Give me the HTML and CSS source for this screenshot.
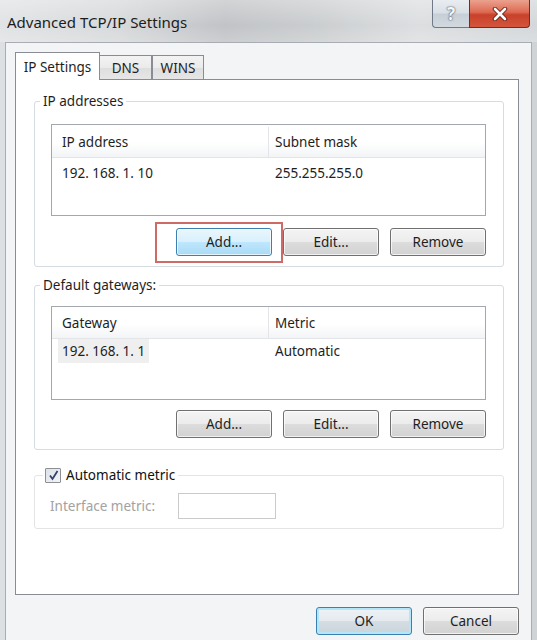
FILE: index.html
```html
<!DOCTYPE html>
<html>
<head>
<meta charset="utf-8">
<title>Advanced TCP/IP Settings</title>
<link rel="stylesheet" href="styles.css">
</head>
<body>
<div class="window">
  <div class="titlebar">
    <span class="title">Advanced TCP/IP Settings</span>
    <div class="caption-btns">
      <span class="cap help">?</span>
      <span class="cap close">
        <svg width="16" height="14" viewBox="0 0 16 14"><path d="M3 2 L13 12 M13 2 L3 12" stroke="#6b2418" stroke-width="4.5" stroke-linecap="round"/><path d="M3 2 L13 12 M13 2 L3 12" stroke="#ffffff" stroke-width="2.6" stroke-linecap="round"/></svg>
      </span>
    </div>
  </div>
  <div class="client">
    <div class="tabs">
      <div class="tab active">IP Settings</div>
      <div class="tab dns">DNS</div>
      <div class="tab wins">WINS</div>
    </div>
    <div class="panel">
      <fieldset class="group g1">
        <legend>IP addresses</legend>
        <div class="group-body body1">
          <div class="list list1">
            <div class="list-head">
              <div class="col c1"><span class="cell">IP address</span></div>
              <div class="col c2"><span class="cell">Subnet mask</span></div>
            </div>
            <div class="list-row">
              <div class="col c1"><span class="cell">192. 168. 1. 10</span></div>
              <div class="col c2"><span class="cell">255.255.255.0</span></div>
            </div>
          </div>
          <div class="btn-row row1">
            <span class="highlight"><button class="btn hot">Add...</button></span>
            <button class="btn">Edit...</button>
            <button class="btn">Remove</button>
          </div>
        </div>
      </fieldset>

      <fieldset class="group g2">
        <legend>Default gateways:</legend>
        <div class="group-body body2">
          <div class="list list2">
            <div class="list-head">
              <div class="col c1"><span class="cell">Gateway</span></div>
              <div class="col c2"><span class="cell">Metric</span></div>
            </div>
            <div class="list-row">
              <div class="col c1"><span class="cell selected">192. 168. 1. 1</span></div>
              <div class="col c2"><span class="cell">Automatic</span></div>
            </div>
          </div>
          <div class="btn-row row2">
            <button class="btn">Add...</button>
            <button class="btn">Edit...</button>
            <button class="btn">Remove</button>
          </div>
        </div>
      </fieldset>

      <fieldset class="group g3">
        <legend class="check-legend">
          <span class="checkbox">
            <svg width="11" height="11" viewBox="0 0 11 11"><path d="M2 5.5 L4.5 9 L9.5 1" stroke="#33416b" stroke-width="1.8" fill="none"/></svg>
          </span>
          <span class="check-label">Automatic metric</span>
        </legend>
        <div class="group-body body3">
          <span class="disabled-label">Interface metric:</span>
          <span class="textbox"></span>
        </div>
      </fieldset>
    </div>
    <div class="dialog-btns">
      <button class="btn default">OK</button>
      <button class="btn">Cancel</button>
    </div>
  </div>
</div>
</body>
</html>
```

FILE: styles.css
```css
html, body {
  margin: 0;
  padding: 0;
  width: 537px;
  height: 640px;
  overflow: hidden;
}

body {
  font-family: "Noto Sans", "Open Sans", sans-serif;
  font-size: 13.5px;
  color: #1e1e1e;
}

.window {
  width: 537px;
  height: 640px;
  overflow: hidden;
  display: flex;
  flex-direction: column;
  background: linear-gradient(90deg, #dde0e2 0%, #d2d5d7 22%, #babdc0 42%, #c4c7c9 58%, #d8dbdd 78%, #cfd3d6 100%);
}

.titlebar {
  height: 42px;
  flex: none;
  display: flex;
  align-items: flex-start;
  background: linear-gradient(180deg, rgba(255,255,255,0.35) 0%, rgba(255,255,255,0.1) 60%, rgba(255,255,255,0.25) 100%);
}

.title {
  padding: 12px 0 0 7px;
  font-size: 15px;
  line-height: 20px;
  color: #1c1c1c;
}

.caption-btns {
  margin-left: auto;
  margin-right: 7px;
  display: flex;
  height: 28px;
}

.cap {
  height: 27px;
  display: flex;
  align-items: center;
  justify-content: center;
  border: 1px solid #6f7a86;
  border-top: none;
}

.help {
  width: 36px;
  border-radius: 0 0 0 4px;
  border-right: none;
  background: linear-gradient(180deg, #e9edf1 0%, #d9dfe5 48%, #c6ced7 52%, #d3d9df 100%);
  color: #f4f6f8;
  font-weight: bold;
  font-size: 17px;
  text-shadow: 0 0 2px #4a5360, 0 0 1px #4a5360;
}

.close {
  width: 59px;
  border-color: #7a2a1c;
  border-radius: 0 0 4px 0;
  background: linear-gradient(180deg, #eba28f 0%, #de6a52 45%, #c9412a 55%, #d4553c 100%);
}

.client {
  margin: 0 5px;
  flex: 1;
  min-height: 0;
  overflow: hidden;
  background: #f3f4f5;
  border: 1px solid #a7adb3;
  border-bottom: none;
  padding: 9px 12px 0 9px;
  display: flex;
  flex-direction: column;
}

/* Tabs */
.tabs {
  display: flex;
  align-items: flex-end;
  height: 27px;
  flex: none;
}

.tab {
  height: 24px;
  box-sizing: border-box;
  border: 1px solid #898c95;
  border-bottom: none;
  display: flex;
  align-items: center;
  justify-content: center;
  font-size: 13.5px;
  background: linear-gradient(180deg, #f3f3f3 0%, #ebebeb 50%, #dedede 51%, #e6e6e6 100%);
}

.tab.active {
  height: 28px;
  width: 85px;
  margin-bottom: -1px;
  background: #ffffff;
  position: relative;
  z-index: 1;
}

.tab.dns {
  width: 52px;
  border-left: none;
}

.tab.wins {
  width: 52px;
  border-left: 1px solid #898c95;
}

.panel {
  height: 516px;
  flex: none;
  box-sizing: border-box;
  border: 1px solid #898c95;
  background: #ffffff;
  display: flex;
  flex-direction: column;
}

/* Group boxes */
.group {
  margin: 0 14px 0 18px;
  padding: 0;
  border: 1px solid #d5dce2;
  border-radius: 3px;
  min-width: 0;
}

.group legend {
  margin-left: 5px;
  padding: 0 3px;
  line-height: 18px;
  font-size: 13.5px;
  color: #1e1e1e;
}

.g1 { margin-top: 12px; }
.g2 { margin-top: 9px; }
.g3 { margin-top: 16px; border-color: #e2e4e6; }

.group-body {
  display: flex;
  flex-direction: column;
}

.body1 { padding: 14px 17px 10px 16px; }
.body2 { padding: 12px 17px 11px 16px; }
.body3 {
  padding: 9px 17px 9px 15px;
  flex-direction: row;
  align-items: center;
}

/* List views */
.list {
  height: 92px;
  box-sizing: border-box;
  border: 1px solid #a3a8b0;
  background: #ffffff;
}

.list2 { height: 94px; }

.list-head {
  height: 32px;
  box-sizing: border-box;
  display: flex;
  border-bottom: 1px solid #e3e5e8;
  background: linear-gradient(180deg, #ffffff 0%, #ffffff 55%, #f3f4f6 100%);
}

.list1 .list-head { height: 33px; padding-top: 2px; }

.list-head .col {
  display: flex;
  align-items: center;
}

.list-head .c1 {
  border-right: 1px solid #e3e5e8;
}

.col.c1 { width: 216px; }
.col.c2 { flex: 1; }

.cell {
  display: inline-block;
  padding: 0 4px;
  margin-left: 6px;
  line-height: 24px;
}

.list-head .c2 .cell { margin-left: 2px; }
.list-row .c2 .cell { margin-left: 3px; }

.list-row {
  display: flex;
  padding-top: 3px;
}

.list2 .list-row { padding-top: 0; }

.cell.selected {
  background: #efefef;
}

/* Buttons */
.btn-row {
  display: flex;
  justify-content: flex-end;
  gap: 11px;
}

.row1 { margin-top: 12px; }
.row2 { margin-top: 10px; }

.btn {
  width: 96px;
  height: 28px;
  box-sizing: border-box;
  border: 1px solid #707070;
  border-radius: 3px;
  padding: 0;
  font-family: "Noto Sans", "Open Sans", sans-serif;
  font-size: 13.5px;
  color: #1e1e1e;
  background: linear-gradient(180deg, #f4f4f4 0%, #ececec 48%, #dcdcdc 52%, #d2d2d2 100%);
  box-shadow: inset 0 0 0 1px rgba(255,255,255,0.7);
}

.btn.hot {
  border-color: #3c7fb1;
  background: linear-gradient(180deg, #eaf6fd 0%, #d9f0fc 48%, #bee6fd 52%, #a9dbf6 100%);
}

.btn.default {
  border-color: #3c7fb1;
  box-shadow: inset 0 0 0 2px #b3e6f9;
  background: linear-gradient(180deg, #eef3f6 0%, #e4eaee 48%, #d4dde3 52%, #cad4db 100%);
}

.highlight {
  position: relative;
  display: inline-flex;
}

.highlight::after {
  content: "";
  position: absolute;
  top: -6px;
  left: -21px;
  right: -11px;
  bottom: -7px;
  border: 2px solid #cf6b66;
  pointer-events: none;
}

/* Checkbox legend */
.check-legend {
  display: flex;
  align-items: center;
}

.group .check-legend {
  margin-left: 8px;
  padding: 0 3px 0 2px;
}

.checkbox {
  width: 16px;
  height: 15px;
  box-sizing: border-box;
  border: 1px solid #8e8f94;
  border-radius: 1px;
  background: linear-gradient(135deg, #dde2ea 0%, #f2f4f7 100%);
  display: inline-flex;
  align-items: center;
  justify-content: center;
  margin-right: 5px;
}

.check-label {
  color: #111111;
}

.disabled-label {
  color: #a2a2a2;
  width: 128px;
}

.textbox {
  width: 98px;
  height: 26px;
  box-sizing: border-box;
  border: 1px solid #c8cacc;
  background: #ffffff;
}

/* Dialog buttons */
.dialog-btns {
  display: flex;
  justify-content: flex-end;
  gap: 11px;
  margin-top: 12px;
  flex: none;
}
```
